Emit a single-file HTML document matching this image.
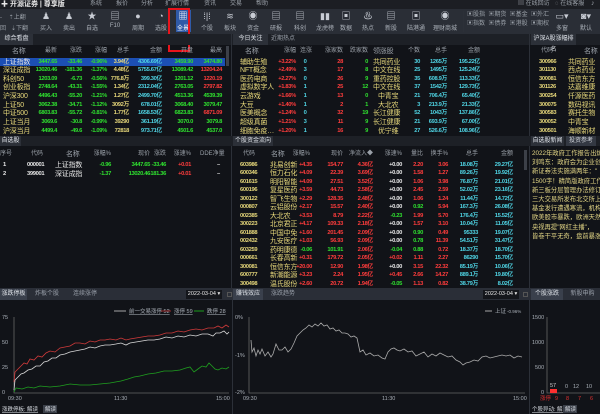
<!DOCTYPE html><html><head><meta charset="utf-8"><style>
*{margin:0;padding:0;box-sizing:border-box}
body{width:600px;height:414px;background:#111318;font-family:"Liberation Sans","Noto Sans CJK SC",sans-serif;font-size:7px;color:#c8c8c8;position:relative;overflow:hidden}
.a{position:absolute;white-space:nowrap}
.tab{position:absolute;height:11px;line-height:11px;font-size:6px;text-align:center;color:#9aa0aa}
.sel{background:#3a404c;color:#e0e4ea}
.row{position:absolute;height:9px;line-height:9px;font-size:6px}
.row span{position:absolute;white-space:nowrap;font-size:5.8px;letter-spacing:-0.35px;font-weight:bold}
.row.hd span{font-weight:normal;letter-spacing:0;font-size:6px}
.L span:nth-child(1),.M span:nth-child(1),.M span:nth-child(6),.R span:nth-child(2),.Z span:nth-child(3),.F span:nth-child(2){font-size:7px;letter-spacing:-0.2px;font-weight:normal}
.g{color:#2fe02f}.rd{color:#ff3c3c}.c{color:#4fd4e4}.y{color:#e6d77a}.w{color:#e8e8e8}.hd{color:#9aa0a8}
.ti{position:absolute;top:10px;width:22px;text-align:center;font-size:6px;color:#aab0b8}
.ti b{display:block;font-size:9px;height:13px;line-height:13px;color:#c8ccd4;font-weight:normal}
.ln{position:absolute;background:#2c3038}
.L span:nth-child(1){left:3px}
.L span:nth-child(2){left:17px;width:40px;text-align:right}
.L span:nth-child(3){left:42px;width:40px;text-align:right}
.L span:nth-child(4){left:67px;width:40px;text-align:right}
.L span:nth-child(5){left:89px;width:40px;text-align:right}
.L span:nth-child(6){left:112px;width:50px;text-align:right}
.L span:nth-child(7){left:143px;width:50px;text-align:right}
.L span:nth-child(8){left:172px;width:50px;text-align:right}
.M span:nth-child(1){left:240px}
.M span:nth-child(2){left:256px;width:40px;text-align:right}
.M span:nth-child(3){left:300px;width:10px;text-align:center}
.M span:nth-child(4){left:323px;width:20px;text-align:right}
.M span:nth-child(5){left:348px;width:20px;text-align:right}
.M span:nth-child(6){left:373px}
.M span:nth-child(7){left:400px;width:20px;text-align:right}
.M span:nth-child(8){left:412px;width:35px;text-align:right}
.M span:nth-child(9){left:440px;width:40px;text-align:right}
.R span:nth-child(1){left:539px}
.R span:nth-child(2){left:568px}
.Z span:nth-child(1){left:3px}
.Z span:nth-child(2){left:27px}
.Z span:nth-child(3){left:55px}
.Z span:nth-child(4){left:86px;width:25px;text-align:right}
.Z span:nth-child(5){left:110px;width:40px;text-align:right}
.Z span:nth-child(6){left:136px;width:30px;text-align:right}
.Z span:nth-child(7){left:166px;width:25px;text-align:right}
.Z span:nth-child(8){left:217px}
.F span:nth-child(1){left:240px}
.F span:nth-child(2){left:270px}
.F span:nth-child(3){left:282px;width:30px;text-align:right}
.F span:nth-child(4){left:313px;width:30px;text-align:right}
.F span:nth-child(5){left:338px;width:35px;text-align:right}
.F span:nth-child(6){left:377px;width:25px;text-align:right}
.F span:nth-child(7){left:403px;width:20px;text-align:right}
.F span:nth-child(8){left:423px;width:25px;text-align:right}
.F span:nth-child(9){left:443px;width:35px;text-align:right}
.F span:nth-child(10){left:473px;width:40px;text-align:right}
.F span:nth-child(1){color:#e6d77a}
.F span:nth-child(2){color:#e6d77a}
</style></head><body>
<div class="a" style="left:0;top:0;width:600px;height:9px;background:#1c1e23"></div>
<div class="a w" style="left:1px;top:0;font-size:7px;line-height:9px;font-weight:bold">✚ 开源证券 | 尊享版</div>
<div class="a hd" style="left:90px;top:0;font-size:6px;line-height:8px">系统</div>
<div class="a hd" style="left:116px;top:0;font-size:6px;line-height:8px">报价</div>
<div class="a hd" style="left:141px;top:0;font-size:6px;line-height:8px">分析</div>
<div class="a hd" style="left:165px;top:0;font-size:6px;line-height:8px">扩展行情</div>
<div class="a hd" style="left:204px;top:0;font-size:6px;line-height:8px">资讯</div>
<div class="a hd" style="left:230px;top:0;font-size:6px;line-height:8px">交易</div>
<div class="a hd" style="left:256px;top:0;font-size:6px;line-height:8px">帮助</div>
<div class="a hd" style="left:518px;top:0;font-size:6px;line-height:8px">▤ 在线回访</div>
<div class="a hd" style="left:555px;top:0;font-size:6px;line-height:8px">◌ 在线客服</div>
<div class="a hd" style="left:591px;top:0;font-size:7px;line-height:8px">♪</div>
<div class="a" style="left:0;top:9px;width:600px;height:25px;background:#2a2e36"></div>
<div class="a hd" style="left:0;top:12px;font-size:6px">- &nbsp;&nbsp;&nbsp;⇡上翻</div>
<div class="a hd" style="left:0;top:23px;font-size:6px">回 &nbsp;&nbsp;⇣下翻</div>
<div class="ti" style="left:35px"><b>♟</b>买入</div>
<div class="ti" style="left:58px"><b>♟</b>卖出</div>
<div class="ti" style="left:81px"><b>★</b>自选</div>
<div class="ti" style="left:104px"><b>▤</b>F10</div>
<div class="ti" style="left:127px"><b>●</b>周期</div>
<div class="ti" style="left:150px"><b>◔</b>选股</div>
<div class="a" style="left:176px;top:10px;width:15px;height:22px;background:#2f5aa8"></div>
<div class="ti" style="left:172px;color:#fff"><b style="color:#fff">▦</b>全景</div>
<div class="ti" style="left:196px"><b>⁞|⁞</b>个股</div>
<div class="ti" style="left:219px"><b>≋</b>板块</div>
<div class="ti" style="left:242px"><b>◉</b>资金</div>
<div class="ti" style="left:265px"><b>▤</b>研报</div>
<div class="ti" style="left:289px"><b>▤</b>科创</div>
<div class="ti" style="left:312px;width:26px"><b>▮▮</b>龙虎榜</div>
<div class="ti" style="left:335px"><b>▣</b>数据</div>
<div class="ti" style="left:357px"><b>♨</b>热点</div>
<div class="ti" style="left:380px"><b>▤</b>新股</div>
<div class="ti" style="left:403px;width:26px"><b>▣</b>陆港通</div>
<div class="ti" style="left:430px;width:30px"><b>◉</b>理财商城</div>
<div class="ln" style="left:463px;top:11px;width:1px;height:21px"></div>
<div class="a hd" style="left:467px;top:11px;font-size:6px;line-height:9px">▣股指 &nbsp;▣期货 &nbsp;▣基金 &nbsp;▣外汇<br>▣指数 &nbsp;▣债券 &nbsp;▣港股 &nbsp;▣期权</div>
<div class="ti" style="left:551px"><b>▭▾</b>多窗</div>
<div class="ti" style="left:575px"><b>◙▾</b>默认</div>
<div class="a" style="left:168px;top:8px;width:22px;height:44px;border:2px solid #e8141c"></div>
<div class="a" style="left:0;top:34px;width:600px;height:11px;background:#1d2026"></div>
<div class="tab sel" style="left:0;top:34px;width:33px;background:#2c3038">综合看盘</div>
<div class="tab sel" style="left:233px;top:34px;width:35px;background:#2c3038">今日关注</div>
<div class="tab" style="left:269px;top:34px;width:28px">近期热点</div>
<div class="tab sel" style="left:531px;top:34px;width:45px;background:#2c3038">沪深A股涨幅排名</div>
<div class="ln" style="left:231px;top:34px;width:1px;height:254px"></div>
<div class="ln" style="left:529px;top:34px;width:1px;height:380px"></div>
<div class="a" style="left:226px;top:46px;width:3px;height:20px;background:#3c4048"></div>
<div class="a" style="left:524px;top:150px;width:3px;height:20px;background:#3c4048"></div>

<div class="row L hd" style="top:47px;width:230px"><span style="left:12px">名称</span><span>最新</span><span>涨跌</span><span>涨幅</span><span>总手</span><span>金额</span><span>开盘</span><span>最高</span></div>
<div class="a" style="left:0;top:58px;width:225px;height:8px;background:#1c4fb4"></div>
<div class="row L" style="top:57.5px"><span class="w">上证指数</span><span class="g">3447.65</span><span class="g">-33.46</span><span class="g">-0.96%</span><span class="y">3.94亿</span><span class="c">4306.69亿</span><span class="g">3459.90</span><span class="g">3474.80</span></div>
<div class="row L" style="top:66px"><span class="y">深证成指</span><span class="g">13020.46</span><span class="g">-181.36</span><span class="g">-1.37%</span><span class="y">4.48亿</span><span class="c">5755.67亿</span><span class="g">13089.42</span><span class="rd">13204.24</span></div>
<div class="row L" style="top:74.7px"><span class="y">科创50</span><span class="g">1203.09</span><span class="g">-6.73</span><span class="g">-0.56%</span><span class="y">776.8万</span><span class="c">399.30亿</span><span class="g">1201.12</span><span class="rd">1220.19</span></div>
<div class="row L" style="top:83.3px"><span class="y">创业板指</span><span class="g">2748.64</span><span class="g">-43.31</span><span class="g">-1.55%</span><span class="y">1.34亿</span><span class="c">2312.04亿</span><span class="g">2763.05</span><span class="rd">2797.82</span></div>
<div class="row L" style="top:92px"><span class="y">沪深300</span><span class="g">4496.43</span><span class="g">-55.20</span><span class="g">-1.21%</span><span class="y">1.27亿</span><span class="c">2499.70亿</span><span class="g">4513.36</span><span class="g">4539.39</span></div>
<div class="row L" style="top:100.6px"><span class="y">上证50</span><span class="g">3062.38</span><span class="g">-34.71</span><span class="g">-1.12%</span><span class="y">3092万</span><span class="c">678.01亿</span><span class="g">3068.40</span><span class="g">3079.47</span></div>
<div class="row L" style="top:109.3px"><span class="y">中证500</span><span class="g">6803.83</span><span class="g">-55.72</span><span class="g">-0.81%</span><span class="y">1.77亿</span><span class="c">1658.53亿</span><span class="g">6823.83</span><span class="rd">6871.09</span></div>
<div class="row L" style="top:118px"><span class="y">上证当月</span><span class="g">3069.6</span><span class="g">-30.8</span><span class="g">-0.99%</span><span class="y">39290</span><span class="c">361.19亿</span><span class="g">3070.0</span><span class="g">3079.8</span></div>
<div class="row L" style="top:126.6px"><span class="y">沪深当月</span><span class="g">4499.4</span><span class="g">-49.6</span><span class="g">-1.09%</span><span class="y">72818</span><span class="c">973.71亿</span><span class="g">4501.6</span><span class="g">4537.0</span></div>

<div class="row M hd" style="top:47px"><span style="left:245px">名称</span><span>涨幅</span><span>连涨</span><span>涨家数</span><span>跌家数</span><span>领涨股</span><span>个数</span><span>总手</span><span>金额</span></div>
<div class="row M" style="top:57.5px"><span class="y">辅助生殖</span><span class="rd">+3.22%</span><span class="c">0</span><span class="rd">28</span><span class="g">0</span><span class="y">共同药业</span><span class="c">30</span><span class="c">1265万</span><span class="c">195.22亿</span></div>
<div class="row M" style="top:66px"><span class="y">NFT概念</span><span class="rd">+2.49%</span><span class="c">3</span><span class="rd">17</span><span class="g">8</span><span class="y">中文在线</span><span class="c">25</span><span class="c">1495万</span><span class="c">125.24亿</span></div>
<div class="row M" style="top:74.7px"><span class="y">医药电商</span><span class="rd">+2.27%</span><span class="c">0</span><span class="rd">26</span><span class="g">9</span><span class="y">重药控股</span><span class="c">35</span><span class="c">608.9万</span><span class="c">113.33亿</span></div>
<div class="row M" style="top:83.3px"><span class="y">虚拟数字人</span><span class="rd">+1.83%</span><span class="c">1</span><span class="rd">25</span><span class="g">12</span><span class="y">中文在线</span><span class="c">37</span><span class="c">1542万</span><span class="c">129.73亿</span></div>
<div class="row M" style="top:92px"><span class="y">云游戏</span><span class="rd">+1.66%</span><span class="c">1</span><span class="rd">13</span><span class="g">0</span><span class="y" style="left:378px">中青宝</span><span class="c">21</span><span class="c">706.4万</span><span class="c">65.40亿</span></div>
<div class="row M" style="top:100.6px"><span class="y">大豆</span><span class="rd">+1.40%</span><span class="c">1</span><span class="rd">2</span><span class="g">1</span><span class="y" style="left:378px">大北农</span><span class="c">3</span><span class="c">213.9万</span><span class="c">21.33亿</span></div>
<div class="row M" style="top:109.3px"><span class="y">医美概念</span><span class="rd">+1.24%</span><span class="c">0</span><span class="rd">32</span><span class="g">19</span><span class="y">长江健康</span><span class="c">52</span><span class="c">1043万</span><span class="c">137.86亿</span></div>
<div class="row M" style="top:118px"><span class="y">超级真菌</span><span class="rd">+1.21%</span><span class="c">3</span><span class="rd">11</span><span class="g">9</span><span class="y">长江健康</span><span class="c">21</span><span class="c">693.9万</span><span class="c">67.00亿</span></div>
<div class="row M" style="top:126.6px"><span class="y">细胞免疫…</span><span class="rd">+1.20%</span><span class="c">1</span><span class="rd">16</span><span class="g">9</span><span class="y" style="left:378px">优宁维</span><span class="c">27</span><span class="c">526.6万</span><span class="c">108.96亿</span></div>

<div class="row R hd" style="top:47px"><span style="left:541px">代码</span><span style="left:584px">名称</span></div>
<div class="row R" style="top:57.5px"><span class="y">300966</span><span class="y">共同药业</span></div>
<div class="row R" style="top:66px"><span class="y">301130</span><span class="y">西点药业</span></div>
<div class="row R" style="top:74.7px"><span class="y">300081</span><span class="y">恒信东方</span></div>
<div class="row R" style="top:83.3px"><span class="y">301126</span><span class="y">达嘉维康</span></div>
<div class="row R" style="top:92px"><span class="y">300254</span><span class="y">仟源医药</span></div>
<div class="row R" style="top:100.6px"><span class="y">300075</span><span class="y">数码视讯</span></div>
<div class="row R" style="top:109.3px"><span class="y">300583</span><span class="y">赛托生物</span></div>
<div class="row R" style="top:118px"><span class="y">300052</span><span class="y">中青宝</span></div>
<div class="row R" style="top:126.6px"><span class="y">300501</span><span class="y">海顺新材</span></div>

<div class="a" style="left:0;top:136px;width:600px;height:10px;background:#1d2026"></div>
<div class="tab sel" style="left:0;top:136px;width:21px;height:10px;line-height:10px;background:#2c3038">自选股</div>
<div class="tab sel" style="left:233px;top:136px;width:40px;height:10px;line-height:10px;background:#2c3038">个股资金流向</div>
<div class="tab sel" style="left:531px;top:136px;width:33px;height:10px;line-height:10px;background:#2c3038">自选股新闻</div>
<div class="tab" style="left:566px;top:136px;width:30px;height:10px;line-height:10px;color:#d0d4da;background:#333842">投资参考</div>

<div class="row Z hd" style="top:150px"><span style="left:0">序号</span><span style="left:31px">代码</span><span style="left:66px">名称</span><span>涨幅%</span><span>现价</span><span>涨跌</span><span>涨速%</span><span style="left:200px">DDE净量</span></div>
<div class="row Z" style="top:161px"><span class="w">1</span><span class="w">000001</span><span class="w">上证指数</span><span class="g">-0.96</span><span class="g">3447.65</span><span class="g">-33.46</span><span class="rd">+0.01</span><span class="w">–</span></div>
<div class="row Z" style="top:170px"><span class="w">2</span><span class="w">399001</span><span class="w">深证成指</span><span class="g">-1.37</span><span class="g">13020.46</span><span class="g">-181.36</span><span class="rd">+0.01</span><span class="w">–</span></div>

<div class="row F hd" style="top:150px"><span style="color:#9aa0a8;left:243px">代码</span><span style="color:#9aa0a8;left:271px">名称</span><span style="left:280px">涨幅%</span><span>现价</span><span>净流入◆</span><span>涨速%</span><span>量比</span><span>换手%</span><span>总手</span><span>金额</span></div>
<div class="row F" style="top:160.5px"><span>603986</span><span>兆易创新</span><span class="rd">+4.35</span><span class="rd">154.77</span><span class="rd">4.36亿</span><span class="w">+0.00</span><span class="rd">2.20</span><span class="rd">3.06</span><span class="c">18.08万</span><span class="c">29.27亿</span></div>
<div class="row F" style="top:169px"><span>600346</span><span>恒力石化</span><span class="rd">+4.09</span><span class="rd">22.39</span><span class="rd">3.69亿</span><span class="w">+0.00</span><span class="rd">1.58</span><span class="rd">1.27</span><span class="c">89.26万</span><span class="c">19.92亿</span></div>
<div class="row F" style="top:177.5px"><span>601615</span><span>明阳智能</span><span class="rd">+4.09</span><span class="rd">27.51</span><span class="rd">3.52亿</span><span class="w">+0.00</span><span class="rd">1.06</span><span class="rd">3.98</span><span class="c">76.87万</span><span class="c">21.01亿</span></div>
<div class="row F" style="top:186px"><span>600196</span><span>复星医药</span><span class="rd">+3.59</span><span class="rd">44.73</span><span class="rd">2.58亿</span><span class="w">+0.00</span><span class="rd">2.45</span><span class="rd">2.59</span><span class="c">52.02万</span><span class="c">23.16亿</span></div>
<div class="row F" style="top:194.5px"><span>300122</span><span>智飞生物</span><span class="rd">+2.29</span><span class="rd">128.35</span><span class="rd">2.48亿</span><span class="w">+0.00</span><span class="rd">1.06</span><span class="rd">1.24</span><span class="c">11.44万</span><span class="c">14.72亿</span></div>
<div class="row F" style="top:203px"><span>000807</span><span>云铝股份</span><span class="rd">+2.17</span><span class="rd">15.57</span><span class="rd">2.40亿</span><span class="w">+0.00</span><span class="g">0.92</span><span class="rd">5.94</span><span class="c">167.3万</span><span class="c">26.08亿</span></div>
<div class="row F" style="top:211.5px"><span>002385</span><span>大北农</span><span class="rd">+3.53</span><span class="rd">8.79</span><span class="rd">2.22亿</span><span class="g">-0.23</span><span class="rd">1.99</span><span class="rd">5.70</span><span class="c">176.4万</span><span class="c">15.52亿</span></div>
<div class="row F" style="top:220px"><span>300223</span><span>北京君正</span><span class="rd">+4.17</span><span class="rd">109.33</span><span class="rd">2.18亿</span><span class="w">+0.00</span><span class="rd">1.57</span><span class="rd">3.10</span><span class="c">10.04万</span><span class="c">11.05亿</span></div>
<div class="row F" style="top:228.5px"><span>601888</span><span>中国中免</span><span class="rd">+1.60</span><span class="rd">201.45</span><span class="rd">2.09亿</span><span class="w">+0.00</span><span class="g">0.90</span><span class="rd">0.49</span><span class="c">95333</span><span class="c">19.07亿</span></div>
<div class="row F" style="top:237px"><span>002432</span><span>九安医疗</span><span class="rd">+1.03</span><span class="rd">56.93</span><span class="rd">2.09亿</span><span class="w">+0.00</span><span class="g">0.78</span><span class="rd">11.39</span><span class="c">54.51万</span><span class="c">31.47亿</span></div>
<div class="row F" style="top:245.5px"><span>603259</span><span>药明康德</span><span class="g">-0.06</span><span class="g">101.91</span><span class="rd">2.06亿</span><span class="g">-0.04</span><span class="g">0.88</span><span class="rd">0.72</span><span class="c">18.37万</span><span class="c">18.70亿</span></div>
<div class="row F" style="top:254px"><span>000661</span><span>长春高新</span><span class="rd">+0.31</span><span class="rd">179.72</span><span class="rd">2.05亿</span><span class="rd">+0.02</span><span class="rd">1.11</span><span class="rd">2.27</span><span class="c">86290</span><span class="c">15.70亿</span></div>
<div class="row F" style="top:262.5px"><span>300081</span><span>恒信东方</span><span class="rd">+20.00</span><span class="rd">12.90</span><span class="rd">1.98亿</span><span class="w">+0.00</span><span class="rd">3.15</span><span class="rd">22.32</span><span class="c">85.19万</span><span class="c">10.06亿</span></div>
<div class="row F" style="top:271px"><span>600777</span><span>新潮能源</span><span class="rd">+3.23</span><span class="rd">2.24</span><span class="rd">1.95亿</span><span class="rd">+0.45</span><span class="rd">2.66</span><span class="rd">14.27</span><span class="c">889.1万</span><span class="c">19.80亿</span></div>
<div class="row F" style="top:279.5px"><span>300498</span><span>温氏股份</span><span class="rd">+2.60</span><span class="rd">20.72</span><span class="rd">1.94亿</span><span class="g">-0.05</span><span class="rd">1.13</span><span class="rd">0.82</span><span class="c">38.79万</span><span class="c">8.02亿</span></div>

<div class="a y" style="left:532px;top:149px;width:68px;height:138px;overflow:hidden;font-size:6.3px;line-height:9.2px;color:#e2d585">2022年政府工作报告出炉<br>刘鸣东：政府会为企业创新<br>新证券法实施满两年："<br>1500字！精简版政府工作报<br>新三板分层管理办法修订<br>三大交易所发布北交所上<br>基金发行遭遇寒流，机构<br>欧美股市暴跌，欧洲天然<br>央视再提"网红主播"，<br>皆卷干平无奇，盘前暴涨</div>

<div class="a" style="left:0;top:288px;width:600px;height:12px;background:#2a2e37"></div>
<div class="tab sel" style="left:0;top:289px;width:27px">涨跌停板</div>
<div class="tab" style="left:28px;top:289px;width:38px">炸板个股</div>
<div class="tab" style="left:66px;top:289px;width:38px">连续涨停</div>
<div class="a w" style="left:186px;top:290px;width:36px;height:9px;background:#14161b;font-size:5.5px;line-height:9px;text-align:center">2022-03-04 ▾</div>
<div class="a" style="left:227px;top:292px;width:5px;height:5px;border:1px solid #555"></div>
<div class="ln" style="left:232px;top:288px;width:1px;height:126px"></div>
<div class="tab sel" style="left:233px;top:289px;width:30px">赚钱效应</div>
<div class="tab" style="left:264px;top:289px;width:38px">涨跌趋势</div>
<div class="a w" style="left:483px;top:290px;width:36px;height:9px;background:#14161b;font-size:5.5px;line-height:9px;text-align:center">2022-03-04 ▾</div>
<div class="a" style="left:523px;top:292px;width:5px;height:5px;border:1px solid #555"></div>
<div class="tab sel" style="left:531px;top:289px;width:32px">个股涨跌</div>
<div class="tab" style="left:565px;top:289px;width:35px">新股申购</div>

<svg class="a" style="left:0;top:300px" width="600" height="114" viewBox="0 300 600 114">
<g font-family="Liberation Sans,Noto Sans CJK SC,sans-serif" font-size="5.5" fill="#aab0b8">
<text x="2" y="319">75</text><text x="2" y="344">50</text><text x="2" y="369">25</text><text x="2" y="394">0</text>
<text x="8" y="400">09:30</text><text x="114" y="400">11:30</text><text x="216" y="400">15:00</text>
<text x="129" y="313" text-decoration="underline">前一交易涨停 52</text><text x="174" y="313" text-decoration="underline">涨停 59</text><text x="207" y="313" text-decoration="underline">跌停 28</text>
<text x="235" y="319">0%</text><text x="235" y="357">-1%</text><text x="235" y="394">-2%</text>
<text x="243" y="400">09:30</text><text x="382" y="400">11:30</text><text x="513" y="400">15:00</text>
<text x="495" y="313">上证</text><text x="507" y="313" font-size="4.5">-0.96%</text>
<text x="532" y="319">1500</text><text x="532" y="344">1000</text><text x="535" y="369">500</text><text x="541" y="394">0</text>
<text x="550" y="387" fill="#ccc">57</text><text x="565" y="388">0</text><text x="573" y="388">12</text><text x="586" y="388">10</text>
</g>
<g stroke-width="0.8">
<line x1="114" y1="311" x2="126" y2="311" stroke="#ccc"/><line x1="161" y1="311" x2="171" y2="311" stroke="#c03030"/><line x1="194" y1="311" x2="204" y2="311" stroke="#20c020"/>
<line x1="485" y1="311" x2="492" y2="311" stroke="#ccc"/>
<polyline fill="none" stroke="#666" points="14,317 14,393 229,393"/>
<polyline fill="none" stroke="#666" points="249,317 249,393 525,393"/>
<polyline fill="none" stroke="#666" points="547,317 547,393 600,393"/>
<polyline fill="none" stroke="#d03a3a" points="14,382 15,372 18,369 21,366 24,363 27,364 30,359 34,360 38,356 42,357 46,353 50,351 55,352 60,348 65,347 70,346 75,343 80,343 85,344 90,341 95,342 100,340 105,340 110,339 116,340 121,338 126,340 130,339 136,338 142,337 148,336 154,336 160,335 166,333 172,333 178,331 184,332 190,330 196,329 202,330 208,328 214,328 218,326 222,328 226,325 229,327"/>
<polyline fill="none" stroke="#d8d8d8" points="14,390 15,380 18,377 21,374 24,373 28,370 32,369 36,366 40,366 44,362 48,361 52,358 56,358 60,355 65,354 70,352 75,351 80,350 85,349 90,347 95,348 100,346 105,345 110,345 116,344 121,343 126,345 130,343 136,342 142,341 148,340 154,340 160,339 166,337 172,338 178,336 184,337 190,335 196,336 202,334 208,334 213,336 216,333 220,333 224,331 227,334 229,332"/>
<polyline fill="none" stroke="#1fa01f" points="14,392 16,388 22,389 28,387 34,388 40,386 50,387 60,386 70,384 80,385 90,385 100,384 110,383 121,381 128,379 134,377 140,376 148,374 156,373 164,371 172,371 180,370 186,368 190,367 194,372 198,369 202,366 206,367 209,363 212,366 215,369 218,370 222,368 226,369 229,367"/>
<polyline fill="none" stroke="#aaaaaa" points="251,340 252,352 254,348 256,356 258,350 260,354 262,349 265,356 268,352 271,357 273,354 276,344 279,350 282,350 285,347 288,352 291,349 294,343 297,336 300,333 303,330 306,328 309,325 312,327 315,324 318,326 321,323 324,326 327,325 330,329 333,328 336,331 339,330 342,333 345,333 348,334 351,337 354,336 357,338 360,352 363,350 366,355 370,353 374,356 378,355 382,358 385,359 388,352 391,349 394,348 397,350 400,351 404,349 408,352 412,351 416,356 420,354 424,352 428,357 432,354 436,356 440,353 444,355 448,357 452,356 456,360 460,362 463,365 466,363 470,362 474,360 478,361 482,357 486,356 490,358 494,357 498,356 502,355 506,356 510,355 514,358 518,356 522,357"/>
</g>
<rect x="550" y="389" width="7" height="4" fill="#ff3030"/>
<g font-family="Liberation Sans,Noto Sans CJK SC,sans-serif" font-size="5.5" fill="#e03030">
<text x="540" y="400">涨停</text><text x="555" y="400">9</text><text x="566" y="400">8</text><text x="578" y="400">7</text><text x="590" y="400">6</text>
</g>
<g font-family="Liberation Sans,Noto Sans CJK SC,sans-serif" font-size="5.5" fill="#d8dce2">
<text x="2" y="411" text-decoration="underline">涨跌停板: 解读</text>
<rect x="43" y="405" width="14" height="8" fill="#3a3f48"/><text x="45" y="411">解读</text>
<text x="532" y="411" text-decoration="underline">个股异动: 解读</text>
<rect x="563" y="405" width="14" height="8" fill="#3a3f48"/><text x="565" y="411">解读</text>
</g>
</svg>
</body></html>
